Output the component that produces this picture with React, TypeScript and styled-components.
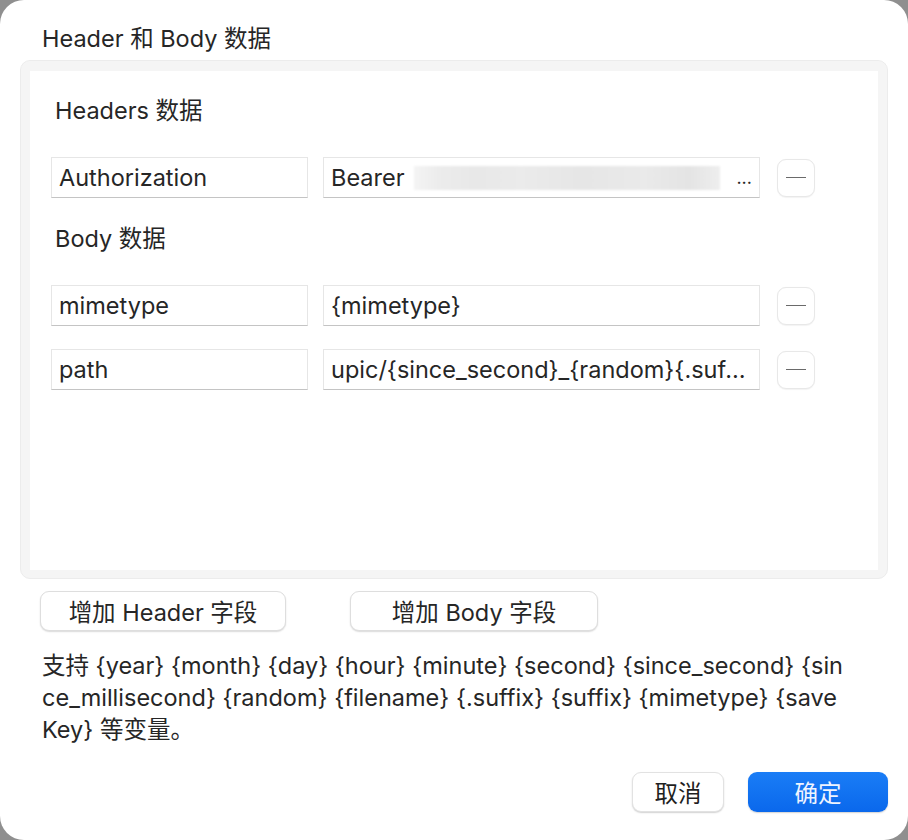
import React from "react";
import styled, { createGlobalStyle } from "styled-components";

const GlobalStyle = createGlobalStyle`
  html, body {
    margin: 0;
    padding: 0;
    background: #8f8f8f;
  }
  * {
    box-sizing: border-box;
  }
`;

const FONT = `Inter, "Noto Sans CJK SC", sans-serif`;

const Window = styled.div`
  width: 908px;
  height: 840px;
  background: #ffffff;
  border-radius: 24px;
  overflow: hidden;
  display: flex;
  flex-direction: column;
  padding: 20px 20px 28px 20px;
  font-family: ${FONT};
  font-size: 23.5px;
  color: #262626;
`;

const Title = styled.div`
  line-height: 38px;
  padding-left: 22px;
  height: 40px;
`;

const GroupBox = styled.div`
  background: #f5f5f5;
  border: 1px solid #ececec;
  border-radius: 10px;
  padding: 10px 9px 8px 9px;
  height: 519px;
`;

const Panel = styled.div`
  background: #ffffff;
  height: 100%;
  padding: 22px 0 0 21px;
`;

const SectionTitle = styled.div<{ $gap: number }>`
  line-height: 36px;
  padding-left: 4px;
  margin-bottom: ${(p) => p.$gap}px;
`;

const Row = styled.div<{ $gap: number }>`
  display: flex;
  align-items: center;
  gap: 15px;
  margin-bottom: ${(p) => p.$gap}px;
`;

const Field = styled.div<{ $width: number }>`
  width: ${(p) => p.$width}px;
  height: 41px;
  background: #ffffff;
  border: 1px solid #e6e6e6;
  border-bottom: 1.5px solid #c4c4c4;
  line-height: 39px;
  padding: 0 7px;
  white-space: nowrap;
  overflow: hidden;
  display: flex;
  align-items: center;
`;

const FieldText = styled.span<{ $fixed?: boolean }>`
  flex: ${(p) => (p.$fixed ? "none" : "0 1 auto")};
  overflow: hidden;
  text-overflow: ellipsis;
  white-space: nowrap;
`;

const Blur = styled.span`
  display: inline-block;
  flex: 0 1 308px;
  min-width: 0;
  height: 24px;
  margin-left: 9px;
  background: linear-gradient(
    90deg,
    #f4f4f4 0%,
    #ececec 8%,
    #e8e8e8 20%,
    #ebebeb 35%,
    #e6e6e6 55%,
    #eaeaea 75%,
    #e4e4e4 90%,
    #eeeeee 100%
  );
  filter: blur(1px);
`;

const Dots = styled.span`
  flex: none;
  margin-left: 16px;
  font-size: 18px;
`;

const RemoveButton = styled.button`
  width: 38px;
  height: 38px;
  margin-left: 2px;
  border: 1px solid #e8e8e8;
  border-radius: 9px;
  background: #ffffff;
  position: relative;
  padding: 0;
  box-shadow: 0 0.5px 1px rgba(0, 0, 0, 0.05);
  &::after {
    content: "";
    position: absolute;
    left: 8px;
    right: 8px;
    top: 17px;
    height: 1.5px;
    background: #6a6a6a;
  }
`;

const Actions = styled.div`
  display: flex;
  gap: 64px;
  padding-left: 20px;
  margin-top: 12px;
`;

const AddButton = styled.button<{ $width: number }>`
  width: ${(p) => p.$width}px;
  height: 40px;
  background: #ffffff;
  border: 1px solid #dedede;
  border-radius: 9px;
  box-shadow: 0 1px 1.5px rgba(0, 0, 0, 0.15);
  font-family: ${FONT};
  font-size: 23.5px;
  color: #262626;
  padding: 0;
`;

const Help = styled.div`
  margin-top: 19px;
  padding: 0 38px 0 22px;
  line-height: 32px;
  word-break: break-all;
`;

const Footer = styled.div`
  margin-top: auto;
  display: flex;
  justify-content: flex-end;
  gap: 24px;
`;

const DialogButton = styled.button<{ $primary?: boolean; $width: number }>`
  width: ${(p) => p.$width}px;
  height: 40px;
  border-radius: 9px;
  font-family: ${FONT};
  font-size: 23.5px;
  padding: 0;
  border: ${(p) => (p.$primary ? "none" : "1px solid #e2e2e2")};
  background: ${(p) =>
    p.$primary ? "linear-gradient(#1a7df6, #0a68ec)" : "#ffffff"};
  color: ${(p) => (p.$primary ? "#eef4ff" : "#1f1f1f")};
  box-shadow: 0 1px 1.5px rgba(0, 0, 0, 0.18);
`;

const App: React.FC = () => {
  return (
    <>
      <GlobalStyle />
      <Window>
        <Title>Header 和 Body 数据</Title>
        <GroupBox>
          <Panel>
            <SectionTitle $gap={28}>Headers 数据</SectionTitle>
            <Row $gap={23}>
              <Field $width={257}>Authorization</Field>
              <Field $width={437}>
                <FieldText $fixed>Bearer</FieldText>
                <Blur />
                <Dots>...</Dots>
              </Field>
              <RemoveButton aria-label="remove" />
            </Row>
            <SectionTitle $gap={28}>Body 数据</SectionTitle>
            <Row $gap={23}>
              <Field $width={257}>mimetype</Field>
              <Field $width={437}>{"{mimetype}"}</Field>
              <RemoveButton aria-label="remove" />
            </Row>
            <Row $gap={0}>
              <Field $width={257}>path</Field>
              <Field $width={437}>
                <FieldText>{"upic/{since_second}_{random}{.suffix}"}</FieldText>
              </Field>
              <RemoveButton aria-label="remove" />
            </Row>
          </Panel>
        </GroupBox>
        <Actions>
          <AddButton $width={246}>增加 Header 字段</AddButton>
          <AddButton $width={248}>增加 Body 字段</AddButton>
        </Actions>
        <Help>
          支持 {"{year} {month} {day} {hour} {minute} {second} {since_second} {since_millisecond} {random} {filename} {.suffix} {suffix} {mimetype} {saveKey}"} 等变量。
        </Help>
        <Footer>
          <DialogButton $width={92}>取消</DialogButton>
          <DialogButton $width={140} $primary>
            确定
          </DialogButton>
        </Footer>
      </Window>
    </>
  );
};

export default App;
